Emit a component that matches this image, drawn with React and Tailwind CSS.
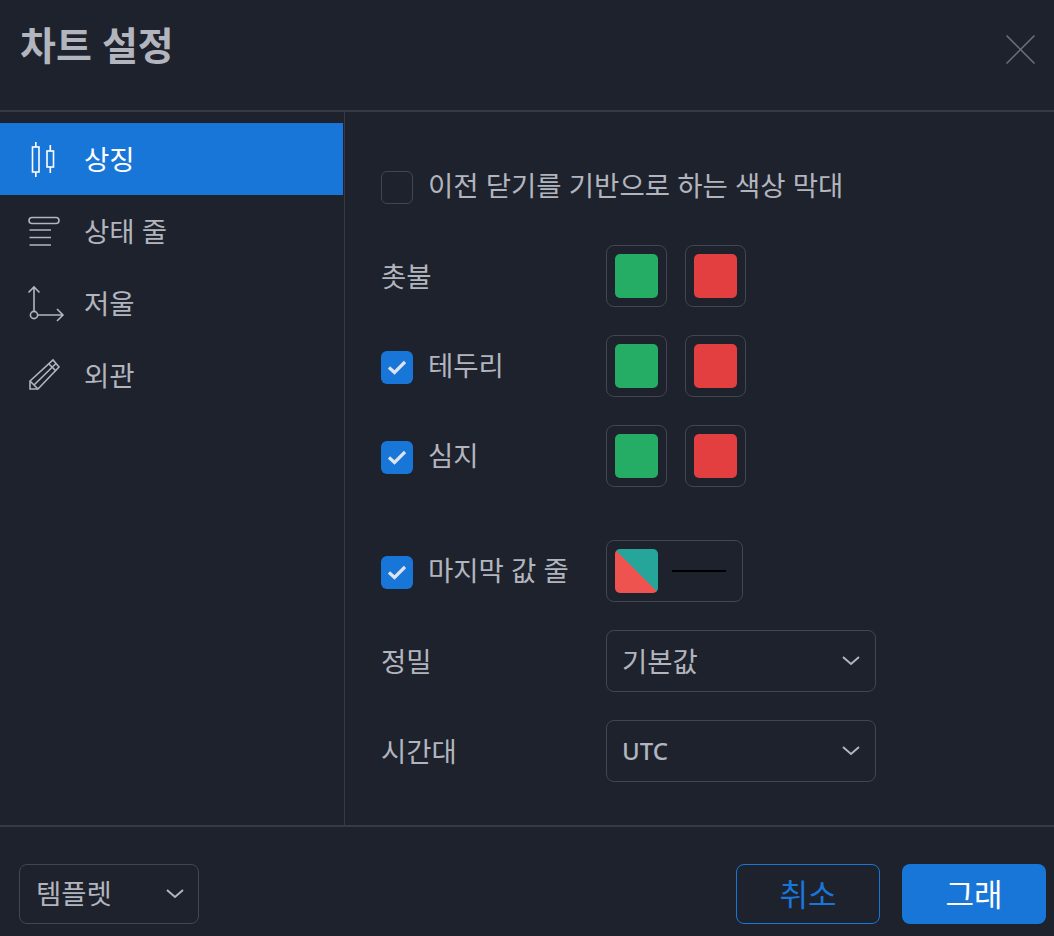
import { useState } from 'react'

const NAV = [
  { key: 'symbol', label: '상징' },
  { key: 'status', label: '상태 줄' },
  { key: 'scale', label: '저울' },
  { key: 'look', label: '외관' },
]

function NavIcon({ name }) {
  return (
    <svg width="40" height="40" viewBox="0 0 40 40" fill="none" stroke="currentColor" strokeWidth="1.600" className="shrink-0">
      {name === 'symbol' && (
        <>
          <rect x="7.500" y="8" width="6.500" height="25" />
          <path d="M10.800 3v5M10.800 33v5" />
          <rect x="22" y="12" width="6.500" height="16" />
          <path d="M25.300 6v6M25.300 28v6" />
        </>
      )}
      {name === 'status' && (
        <>
          <rect x="4" y="6.500" width="30" height="6" rx="3" />
          <path d="M4.500 19h21.500M4.500 26.500h21.500M4.500 34h21.500" />
        </>
      )}
      {name === 'scale' && (
        <>
          <circle cx="9" cy="32" r="3.600" />
          <path d="M9 28.400V4M3.500 9.500L9 4l5.500 5.500" />
          <path d="M12.600 32H38M32 26l6 6-6 6" />
        </>
      )}
      {name === 'look' && (
        <>
          <path d="M5 34v-8L28 5l6 7-21 22z" />
          <path d="M5 26l8 8M9 30L31 8.500M24 9l7 7" />
        </>
      )}
    </svg>
  )
}

function Check({ checked }) {
  if (!checked) {
    return <span className="block w-8 h-[33px] shrink-0 rounded-[6px] border border-[#434651]" />
  }
  return (
    <span className="flex items-center justify-center w-8 h-[33px] mt-[2px] shrink-0 rounded-[6px] bg-[#1976d9]">
      <svg width="18" height="15" viewBox="0 0 18 15" fill="none">
        <path d="M1 7.500l5.500 5L17 2" stroke="#dfe3ec" strokeWidth="3.200" />
      </svg>
    </span>
  )
}

function Swatch({ color }) {
  return (
    <div className="flex items-center justify-center w-[61px] h-[62px] rounded-[8px] border border-[#434651]">
      <span className={`block w-[43px] h-[44px] rounded-[5px] ${color}`} />
    </div>
  )
}

function Chevron() {
  return (
    <svg width="20" height="12" viewBox="0 0 20 12" fill="none" className="shrink-0">
      <path d="M2 2l8 7 8-7" stroke="#b2b5be" strokeWidth="2" />
    </svg>
  )
}

function Select({ value, latin }) {
  return (
    <div className="flex items-center justify-between w-[270px] h-[62px] pl-[15px] pr-[14px] rounded-[8px] border border-[#434651]">
      <span className={latin ? 'text-[24px] font-medium' : 'mt-[2px]'}>{value}</span>
      <Chevron />
    </div>
  )
}

function Row({ label, checked, children, className = '' }) {
  return (
    <div className={`flex items-center h-[62px] ${className}`}>
      <div className="flex items-center gap-[15px] w-[225px]">
        {checked !== undefined && <Check checked={checked} />}
        <span className={checked ? '' : 'mt-[2px]'}>{label}</span>
      </div>
      {children}
    </div>
  )
}

function ColorPair() {
  return (
    <div className="flex gap-[18px]">
      <Swatch color="bg-[#26ad65]" />
      <Swatch color="bg-[#e33e40]" />
    </div>
  )
}

export default function App() {
  const [active, setActive] = useState('symbol')

  return (
    <div className="w-[1054px] h-[936px] flex flex-col overflow-hidden bg-[#1e222d] text-[#b2b5be] text-[27.5px] leading-[36px] font-['Noto_Sans','Noto_Sans_CJK_KR',sans-serif]">
      <header className="flex items-start justify-between h-[112px] shrink-0 pl-5 pr-[19px] border-b-2 border-[#363a45]">
        <h1 className="mt-[20px] text-[39px] leading-[50px] font-bold">차트 설정</h1>
        <button className="mt-[35px] text-[#6f717c]">
          <svg width="29" height="29" viewBox="0 0 29 29" fill="none" stroke="currentColor" strokeWidth="1.500" className="block">
            <path d="M0.500 0.500l28 28M28.500 0.500l-28 28" />
          </svg>
        </button>
      </header>

      <div className="flex flex-1 min-h-0">
        <nav className="w-[345px] shrink-0 pt-[11px] pr-px border-r border-[#363a45]">
          {NAV.map((item) => (
            <button
              key={item.key}
              onClick={() => setActive(item.key)}
              className={`flex items-center gap-[19px] w-full h-[72px] pl-[25px] text-left ${active === item.key ? 'bg-[#1976d9] text-white' : ''}`}
            >
              <NavIcon name={item.key} />
              <span className="mt-[2px]">{item.label}</span>
            </button>
          ))}
        </nav>

        <section className="flex-1 pl-9 pt-[59px]">
          <div className="flex items-center gap-[15px] h-[33px] mb-[41px]">
            <Check checked={false} />
            <span className="mb-[3px]">이전 닫기를 기반으로 하는 색상 막대</span>
          </div>
          <div className="flex flex-col gap-7">
            <Row label="촛불"><ColorPair /></Row>
            <Row label="테두리" checked><ColorPair /></Row>
            <Row label="심지" checked><ColorPair /></Row>
            <Row label="마지막 값 줄" checked className="mt-[25px]">
              <div className="flex items-center w-[137px] h-[62px] pl-2 rounded-[8px] border border-[#434651]">
                <span className="block w-[43px] h-[44px] rounded-[5px] bg-[linear-gradient(45deg,#ef5350_50%,#26a69a_50%)]" />
                <span className="block w-[54px] h-0.5 ml-[14px] bg-black" />
              </div>
            </Row>
            <Row label="정밀"><Select value="기본값" /></Row>
            <Row label="시간대"><Select value="UTC" latin /></Row>
          </div>
        </section>
      </div>

      <footer className="flex items-start justify-between h-[111px] shrink-0 pt-[37px] pl-[19px] pr-2 border-t-2 border-[#363a45]">
        <div className="flex items-center justify-between w-[180px] h-[60px] pl-4 pr-[13px] rounded-[8px] border border-[#434651]">
          <span>템플렛</span>
          <Chevron />
        </div>
        <div className="flex gap-[22px] text-[31px]">
          <button className="w-[144px] h-[60px] rounded-[8px] border border-[#1976d9] text-[#1976d9]">취소</button>
          <button className="w-[144px] h-[60px] rounded-[8px] bg-[#1976d9] text-white">그래</button>
        </div>
      </footer>
    </div>
  )
}
